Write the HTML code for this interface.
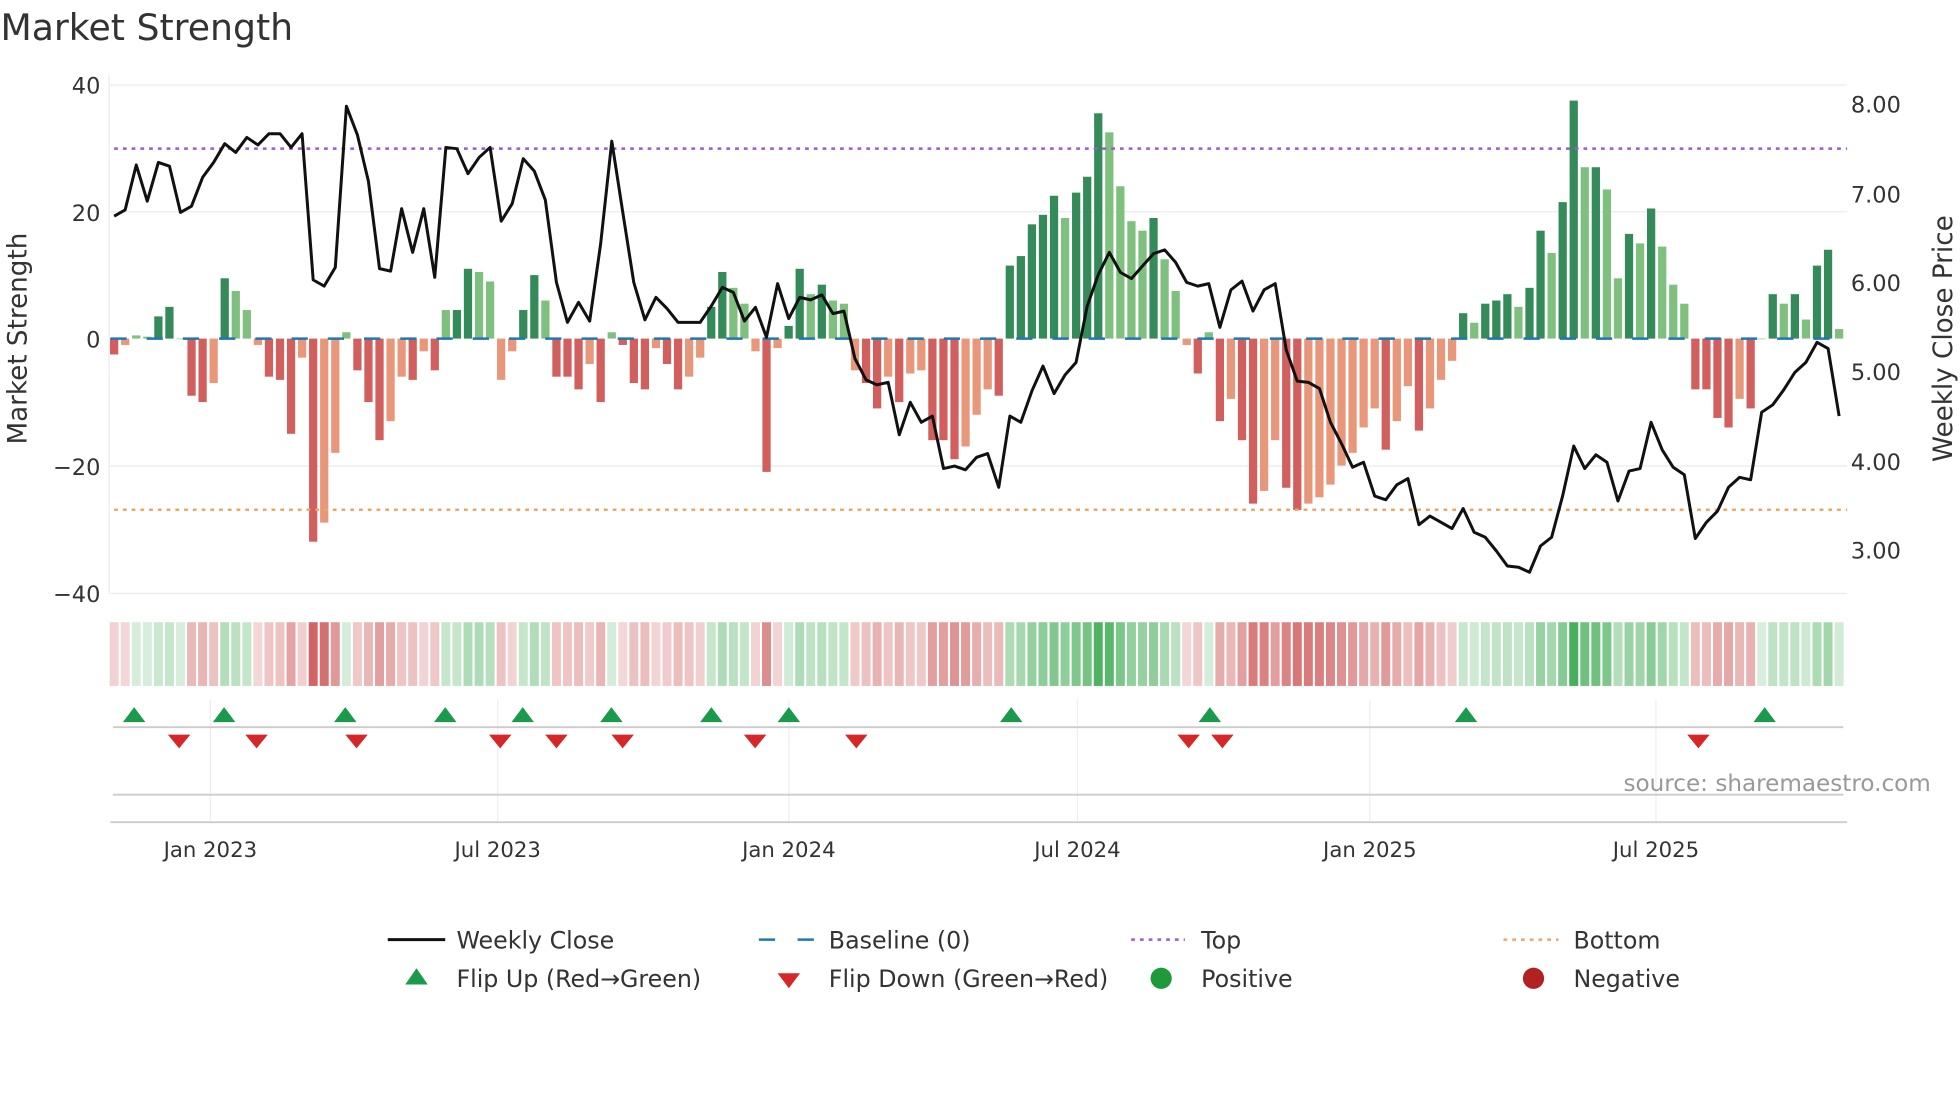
<!DOCTYPE html>
<html><head><meta charset="utf-8"><style>
html,body{margin:0;padding:0;background:#fff}
svg{display:block;font-family:"DejaVu Sans","Liberation Sans",sans-serif}
</style></head><body>
<svg id="s" width="1960" height="1102" viewBox="0 0 1568 882" xmlns="http://www.w3.org/2000/svg">
<rect width="1568" height="882" fill="#fff"/>
<text x="0" y="32" font-size="29" fill="#333">Market Strength</text>
<g stroke="#ebebf0" stroke-width="1">
<line x1="87" y1="68" x2="1478" y2="68"/><line x1="87" y1="169.5" x2="1478" y2="169.5"/>
<line x1="87" y1="373" x2="1478" y2="373"/><line x1="87" y1="475" x2="1478" y2="475"/>
<line x1="87" y1="60" x2="87" y2="475"/>
</g>
<g stroke="#eeeeee" stroke-width="1">
<line x1="168" y1="560" x2="168" y2="658"/><line x1="398" y1="560" x2="398" y2="658"/>
<line x1="631" y1="560" x2="631" y2="658"/><line x1="862" y1="560" x2="862" y2="658"/>
<line x1="1096" y1="560" x2="1096" y2="658"/><line x1="1325" y1="560" x2="1325" y2="658"/>
</g>
<g font-size="18" fill="#333" text-anchor="end">
<text x="80" y="75">40</text><text x="80" y="177">20</text><text x="80" y="278">0</text>
<text x="80" y="380">−20</text><text x="80" y="482">−40</text>
</g>
<g font-size="18" fill="#333">
<text x="1481" y="90">8.00</text><text x="1481" y="162">7.00</text><text x="1481" y="233">6.00</text>
<text x="1481" y="304">5.00</text><text x="1481" y="376">4.00</text><text x="1481" y="447">3.00</text>
</g>
<text transform="translate(21,271) rotate(-90)" font-size="21" fill="#333" text-anchor="middle">Market Strength</text>
<text transform="translate(1562,271) rotate(-90)" font-size="21" fill="#333" text-anchor="middle">Weekly Close Price</text>
<g id="bars"></g>
<line x1="88" y1="271" x2="1478" y2="271" stroke="#1f77b4" stroke-width="2" stroke-dasharray="13,16"/>
<line x1="91" y1="119" x2="1478" y2="119" stroke="#9b59d6" stroke-width="2" stroke-dasharray="3,4"/>
<line x1="91" y1="408" x2="1478" y2="408" stroke="#eda668" stroke-width="2" stroke-dasharray="3,4"/>
<polyline id="price" fill="none" stroke="#111" stroke-width="2.4" stroke-linejoin="round"/>
<g id="strip"></g>
<line x1="90" y1="582" x2="1475" y2="582" stroke="#ccc" stroke-width="1.5"/>
<line x1="90" y1="636" x2="1475" y2="636" stroke="#ccc" stroke-width="1.5"/>
<line x1="88" y1="658" x2="1478" y2="658" stroke="#ccc" stroke-width="1.5"/>
<g id="marks"></g>
<text x="1545" y="633" font-size="18.5" fill="#999" text-anchor="end">source: sharemaestro.com</text>
<g font-size="17" fill="#333" text-anchor="middle">
<text x="168" y="686">Jan 2023</text><text x="398" y="686">Jul 2023</text><text x="631" y="686">Jan 2024</text>
<text x="862" y="686">Jul 2024</text><text x="1096" y="686">Jan 2025</text><text x="1325" y="686">Jul 2025</text>
</g>
<g font-size="19" fill="#333">
<line x1="310" y1="752" x2="356" y2="752" stroke="#111" stroke-width="2.4"/>
<text x="365" y="759">Weekly Close</text>
<line x1="607" y1="752" x2="651" y2="752" stroke="#1f77b4" stroke-width="2" stroke-dasharray="13,18"/>
<text x="663" y="759">Baseline (0)</text>
<line x1="905" y1="752" x2="948" y2="752" stroke="#9b59d6" stroke-width="2" stroke-dasharray="3,4"/>
<text x="961" y="759">Top</text>
<line x1="1203" y1="752" x2="1247" y2="752" stroke="#eda668" stroke-width="2" stroke-dasharray="3,4"/>
<text x="1259" y="759">Bottom</text>
<polygon points="324,788 342,788 333,775" fill="#1a9a4a"/>
<text x="365" y="790">Flip Up (Red→Green)</text>
<polygon points="622,779 640,779 631,791" fill="#d62728"/>
<text x="663" y="790">Flip Down (Green→Red)</text>
<circle cx="929" cy="783" r="8.5" fill="#1f9a3a"/>
<text x="961" y="790">Positive</text>
<circle cx="1227" cy="783" r="8.5" fill="#b22222"/>
<text x="1259" y="790">Negative</text>
</g>
</svg>
<script>
var v=[-2.5,-1,0.5,0.3,3.5,5,0,-9,-10,-7,9.5,7.5,4.5,-1,-6,-6.5,-15,-3,-32,-29,-18,1,-5,-10,-16,-13,-6,-6.5,-2,-5,4.5,4.5,11,10.5,9,-6.5,-2,4.5,10,6,-6,-6,-8,-4,-10,1,-1,-7,-8,-1.5,-4,-8,-6,-3,5,10.5,8,5.5,-2,-21,-1.5,2,11,7,8.5,6,5.5,-5,-7,-11,-6,-10,-5.5,-5,-16,-16,-19,-17,-12,-8,-9,11.5,13,18,19.5,22.5,19,23,25.5,35.5,32.5,24,18.5,17,19,12.5,7.5,-1,-5.5,1,-13,-9.5,-16,-26,-24,-16,-23.5,-27,-26,-25,-23,-20,-18,-14,-11,-17.5,-13,-7.5,-14.5,-11,-6.5,-3.5,4,2.5,5.5,6,7,5,8,17,13.5,21.5,37.5,27,27,23.5,9.5,16.5,15,20.5,14.5,8.5,5.5,-8,-8,-12.5,-14,-9.5,-11,0,7,5.5,7,3,11.5,14,1.5];
var p=[173,168,132,161,130,133,170,165,142,130,115,122,110,116,107,107,118,107,224,229,214,85,108,145,215,217,167,202,167,222,118,119,139,126,118,177,163,127,137,160,226,258,242,257,195,113,170,226,256,238,247,258,258,258,245,230,234,257,246,270,227,255,238,240,236,251,249,287,304,308,306,348,322,338,333,375,373,376,366,363,390,333,338,313,293,315,300,290,245,220,202,218,223,213,203,200,210,226,229,227,262,232,225,249,232,227,280,305,306,311,338,355,374,370,397,400,388,383,420,413,418,423,407,426,430,441,453,454,458,437,430,397,357,375,364,370,401,377,375,338,360,374,380,431,418,409,390,382,384,330,324,312,298,290,274,279,333];
var NS="http://www.w3.org/2000/svg";
function el(g,t,a){var e=document.createElementNS(NS,t);for(var k in a)e.setAttribute(k,a[k]);document.getElementById(g).appendChild(e);}
var x0=91,st=8.85,pts=[];
for(var i=0;i<v.length;i++){
 var x=x0+st*i,val=v[i],prev=i?v[i-1]:0,dark=Math.abs(val)>=Math.abs(prev);
 var c=val>=0?(dark?"#358a5a":"#80c07e"):(dark?"#d05f5d":"#e9977a");
 var h=Math.abs(val)*5.08,y=val>=0?271-h:271;
 el("bars","rect",{x:x-3.3,y:y,width:6.6,height:Math.max(h,0.5),fill:c});
 var a=0.2+0.75*Math.min(Math.abs(val),38)/38;
 el("strip","rect",{x:x-3.6,y:498,width:7.2,height:51,fill:val>=0?"rgb(60,170,80)":"rgb(200,70,70)","fill-opacity":a});
 pts.push(x.toFixed(1)+","+p[i]);
}
document.getElementById("price").setAttribute("points",pts.join(" "));
[107,179,276,356,418,489,569,631,809,968,1173,1412].forEach(function(x){el("marks","polygon",{points:(x-9)+",578 "+(x+9)+",578 "+x+",566",fill:"#1a9a4a"});});
[143,205,285,400,445,498,604,685,951,978,1359].forEach(function(x){el("marks","polygon",{points:(x-9)+",588 "+(x+9)+",588 "+x+",599",fill:"#d62728"});});
</script>
</body></html>
